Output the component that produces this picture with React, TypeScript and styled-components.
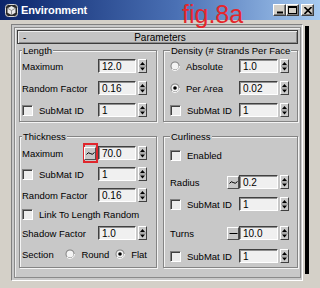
import styled, { createGlobalStyle } from "styled-components";

const GlobalStyle = createGlobalStyle`
  html, body {
    margin: 0;
    padding: 0;
  }
  body {
    width: 320px;
    height: 288px;
    overflow: hidden;
    background: #d4d0c8;
    font-family: "Liberation Sans", Arial, sans-serif;
    color: #000;
  }
`;

const Window = styled.div`
  position: relative;
  width: 320px;
  height: 288px;
  display: flex;
  flex-direction: column;
  background: #d4d0c8;
  overflow: hidden;
`;

const TitleBar = styled.div`
  flex: none;
  height: 20px;
  display: flex;
  align-items: center;
  padding: 0 6px 0 5px;
  background: linear-gradient(90deg, #0a246a 0%, #4a70b4 55%, #a6caf0 100%);
`;

const TitleText = styled.span`
  margin-left: 3px;
  color: #fff;
  font-size: 11px;
  font-weight: bold;
  letter-spacing: -0.1px;
`;

const FigNote = styled.div`
  position: absolute;
  left: 182px;
  top: 2px;
  color: #e5262c;
  font-size: 25px;
  line-height: 25px;
`;

const Caption = styled.div`
  margin-left: auto;
  display: flex;
  align-items: center;
`;

const CapButton = styled.div<{ $gap?: number }>`
  width: 13px;
  height: 12px;
  margin-left: ${({ $gap }) => $gap ?? 0}px;
  box-sizing: border-box;
  background: #d4d0c8;
  border: 1px solid;
  border-color: #ffffff #404040 #404040 #ffffff;
  box-shadow: inset -1px -1px 0 #808080;
  display: flex;
  align-items: center;
  justify-content: center;
`;

const Body = styled.div`
  flex: 1;
  display: flex;
  padding: 4px 0 7px 11px;
  min-height: 0;
`;

const Panel = styled.div`
  width: 292px;
  box-sizing: border-box;
  display: flex;
  border: 1px solid;
  border-color: #808080 #ffffff #ffffff #808080;
  padding: 2px;
  background: #c8c8c8;
`;

const Rollout = styled.div`
  flex: 1;
  display: flex;
  flex-direction: column;
  border: 1px solid #8a8a8a;
  box-shadow: inset 1px 1px 0 #ececec;
  padding: 2px 2px 0;
`;

const RollTitle = styled.div`
  flex: none;
  height: 14px;
  box-sizing: border-box;
  display: flex;
  align-items: center;
  position: relative;
  border: 1px solid #3c3c3c;
  box-shadow: inset 1px 1px 0 #eeeeee, inset -1px -1px 0 #8c8c8c;
  background: #c4c4c4;
  font-size: 10px;
`;

const Minus = styled.span`
  width: 0;
  padding-left: 5px;
`;

const RollName = styled.span`
  flex: 1;
  text-align: center;
`;

const Groups = styled.div`
  display: grid;
  grid-template-columns: 138px 135px;
  column-gap: 6px;
  row-gap: 9px;
  margin: 1px 0 0 2px;
`;

const Group = styled.fieldset<{ $pad: string }>`
  margin: 0;
  min-width: 0;
  padding: ${({ $pad }) => $pad};
  border: 1px solid #848484;
  box-shadow: inset 1px 1px 0 #f4f4f4, 1px 1px 0 #f4f4f4;
`;

const Legend = styled.legend`
  padding: 0 1px;
  background: #c8c8c8;
  font-size: 9.5px;
  line-height: 11px;
  white-space: nowrap;
`;

const Row = styled.div<{ $mt: number }>`
  display: flex;
  align-items: center;
  height: 14px;
  margin-top: ${({ $mt }) => $mt}px;
  font-size: 9.5px;
  white-space: nowrap;
`;

const Label = styled.span<{ $w?: number }>`
  ${({ $w }) => ($w ? `width: ${$w}px;` : "flex: 1;")}
`;

const OptText = styled.span<{ $grow?: boolean }>`
  margin-left: 6px;
  ${({ $grow }) => ($grow ? "flex: 1;" : "")}
`;

const Field = styled.div<{ $w: number }>`
  width: ${({ $w }) => $w}px;
  height: 14px;
  box-sizing: border-box;
  display: flex;
  align-items: center;
  padding-left: 3px;
  border: 1px solid;
  border-color: #404040 #ffffff #ffffff #404040;
  box-shadow: inset 1px 1px 0 #909090;
  background: #f0f0f0;
  font-size: 10px;
`;

const Spinner = styled.div`
  width: 9px;
  height: 14px;
  margin-left: 2px;
  box-sizing: border-box;
  border: 1px solid;
  border-color: #ffffff #404040 #404040 #ffffff;
  background: #cacaca;
  display: flex;
`;

const Box = styled.div`
  width: 11px;
  height: 11px;
  flex: none;
  box-sizing: border-box;
  border: 1px solid;
  border-color: #808080 #ffffff #ffffff #808080;
  box-shadow: inset 1px 1px 0 #404040;
  background: #ececec;
`;

const MiniButton = styled.div`
  width: 12px;
  height: 13px;
  flex: none;
  box-sizing: border-box;
  border: 1px solid;
  border-color: #ffffff #505050 #505050 #ffffff;
  background: #c8c8c8;
  display: flex;
  align-items: center;
  justify-content: center;
`;

const RedMark = styled.div`
  width: 15px;
  height: 20px;
  flex: none;
  box-sizing: border-box;
  border: 2px solid #e0262c;
  display: flex;
  align-items: center;
  justify-content: flex-end;
`;

const ScrollTrack = styled.div`
  width: 4px;
  margin: 2px 0 0 2px;
  height: 248px;
  background: #000;
`;

function Spin() {
  return (
    <Spinner>
      <svg width="7" height="12" viewBox="0 0 7 12">
        <path d="M3.5 2 L6 5 H1 Z" fill="#000" />
        <path d="M0 6 H7" stroke="#8a8a8a" strokeWidth="1" />
        <path d="M1 7.5 H6 L3.5 10.5 Z" fill="#000" />
      </svg>
    </Spinner>
  );
}

function Num({ value, w }: { value: string; w: number }) {
  return (
    <>
      <Field $w={w}>{value}</Field>
      <Spin />
    </>
  );
}

function Radio({ on }: { on?: boolean }) {
  return (
    <svg width="10" height="10" viewBox="0 0 10 10" style={{ flex: "none" }}>
      <circle cx="5" cy="5" r="4.5" fill="#808080" />
      <path d="M9.5 5 A4.5 4.5 0 0 1 1.8 8.2" stroke="#fff" strokeWidth="1" fill="none" />
      <circle cx="5" cy="5" r="3.5" fill="#f4f4f4" />
      {on && <circle cx="5" cy="5" r="1.8" fill="#000" />}
    </svg>
  );
}

function Tilde() {
  return (
    <MiniButton>
      <svg width="9" height="7" viewBox="0 0 9 7">
        <path d="M0.5 4.5 Q2.2 1.5 4.2 3.5 T8.5 2.5" stroke="#000" strokeWidth="1" fill="none" />
      </svg>
    </MiniButton>
  );
}

function Dash() {
  return (
    <MiniButton>
      <svg width="9" height="7" viewBox="0 0 9 7">
        <path d="M0.5 3.5 H8.5" stroke="#000" strokeWidth="1" />
      </svg>
    </MiniButton>
  );
}

function AppIcon() {
  return (
    <svg width="13" height="13" viewBox="0 0 13 13">
      <rect x="0.5" y="0.5" width="12" height="12" rx="3" fill="#2a2a2a" stroke="#d8d8d8" />
      <path d="M6.5 2 L10.5 4.2 V8.8 L6.5 11 L2.5 8.8 V4.2 Z" fill="#e8e8e8" />
      <path d="M6.5 6.5 L10.5 4.2 M6.5 6.5 V11 M6.5 6.5 L2.5 4.2" stroke="#777" strokeWidth="0.8" />
    </svg>
  );
}

export default function App() {
  const L = 38;
  const R = 39;
  return (
    <Window>
      <GlobalStyle />
      <TitleBar>
        <AppIcon />
        <TitleText>Environment</TitleText>
        <Caption>
          <CapButton>
            <svg width="8" height="8" viewBox="0 0 8 8">
              <rect x="1" y="5.5" width="6" height="2" fill="#000" />
            </svg>
          </CapButton>
          <CapButton>
            <svg width="9" height="8" viewBox="0 0 9 8">
              <rect x="0.5" y="0.5" width="8" height="7" fill="none" stroke="#000" />
              <rect x="0.5" y="0.5" width="8" height="1.5" fill="#000" />
            </svg>
          </CapButton>
          <CapButton $gap={2}>
            <svg width="8" height="7" viewBox="0 0 8 7">
              <path d="M0.5 0 L7.5 7 M7.5 0 L0.5 7" stroke="#000" strokeWidth="1.6" />
            </svg>
          </CapButton>
        </Caption>
      </TitleBar>
      <FigNote>fig.8a</FigNote>
      <Body>
        <Panel>
          <Rollout>
            <RollTitle>
              <Minus>-</Minus>
              <RollName>Parameters</RollName>
            </RollTitle>
            <Groups>
              <Group $pad="0 9px 4px 2px">
                <Legend>Length</Legend>
                <Row $mt={3}>
                  <Label>Maximum</Label>
                  <Num value="12.0" w={L} />
                </Row>
                <Row $mt={8}>
                  <Label>Random Factor</Label>
                  <Num value="0.16" w={L} />
                </Row>
                <Row $mt={8}>
                  <Box />
                  <OptText $grow>SubMat ID</OptText>
                  <Num value="1" w={L} />
                </Row>
              </Group>
              <Group $pad="0 8px 4px 6px">
                <Legend>Density (# Strands Per Face</Legend>
                <Row $mt={3}>
                  <Radio />
                  <OptText $grow>Absolute</OptText>
                  <Num value="1.0" w={R} />
                </Row>
                <Row $mt={8}>
                  <Radio on />
                  <OptText $grow>Per Area</OptText>
                  <Num value="0.02" w={R} />
                </Row>
                <Row $mt={8}>
                  <Box />
                  <OptText $grow>SubMat ID</OptText>
                  <Num value="1" w={R} />
                </Row>
              </Group>
              <Group $pad="0 9px 6px 2px">
                <Legend>Thickness</Legend>
                <Row $mt={4}>
                  <Label>Maximum</Label>
                  <RedMark>
                    <Tilde />
                  </RedMark>
                  <Num value="70.0" w={L} />
                </Row>
                <Row $mt={7}>
                  <Box />
                  <OptText $grow>SubMat ID</OptText>
                  <Num value="1" w={L} />
                </Row>
                <Row $mt={7}>
                  <Label>Random Factor</Label>
                  <Num value="0.16" w={L} />
                </Row>
                <Row $mt={5}>
                  <Box />
                  <OptText>Link To Length Random</OptText>
                </Row>
                <Row $mt={5}>
                  <Label>Shadow Factor</Label>
                  <Num value="1.0" w={L} />
                </Row>
                <Row $mt={7}>
                  <Label $w={45}>Section</Label>
                  <Radio />
                  <OptText>Round</OptText>
                  <span style={{ width: 6 }} />
                  <Radio on />
                  <OptText>Flat</OptText>
                </Row>
              </Group>
              <Group $pad="0 8px 4px 6px">
                <Legend>Curliness</Legend>
                <Row $mt={6}>
                  <Box />
                  <OptText>Enabled</OptText>
                </Row>
                <Row $mt={13}>
                  <Label>Radius</Label>
                  <Tilde />
                  <Num value="0.2" w={R} />
                </Row>
                <Row $mt={8}>
                  <Box />
                  <OptText $grow>SubMat ID</OptText>
                  <Num value="1" w={R} />
                </Row>
                <Row $mt={15}>
                  <Label>Turns</Label>
                  <Dash />
                  <Num value="10.0" w={R} />
                </Row>
                <Row $mt={9}>
                  <Box />
                  <OptText $grow>SubMat ID</OptText>
                  <Num value="1" w={R} />
                </Row>
              </Group>
            </Groups>
          </Rollout>
        </Panel>
        <ScrollTrack />
      </Body>
    </Window>
  );
}
